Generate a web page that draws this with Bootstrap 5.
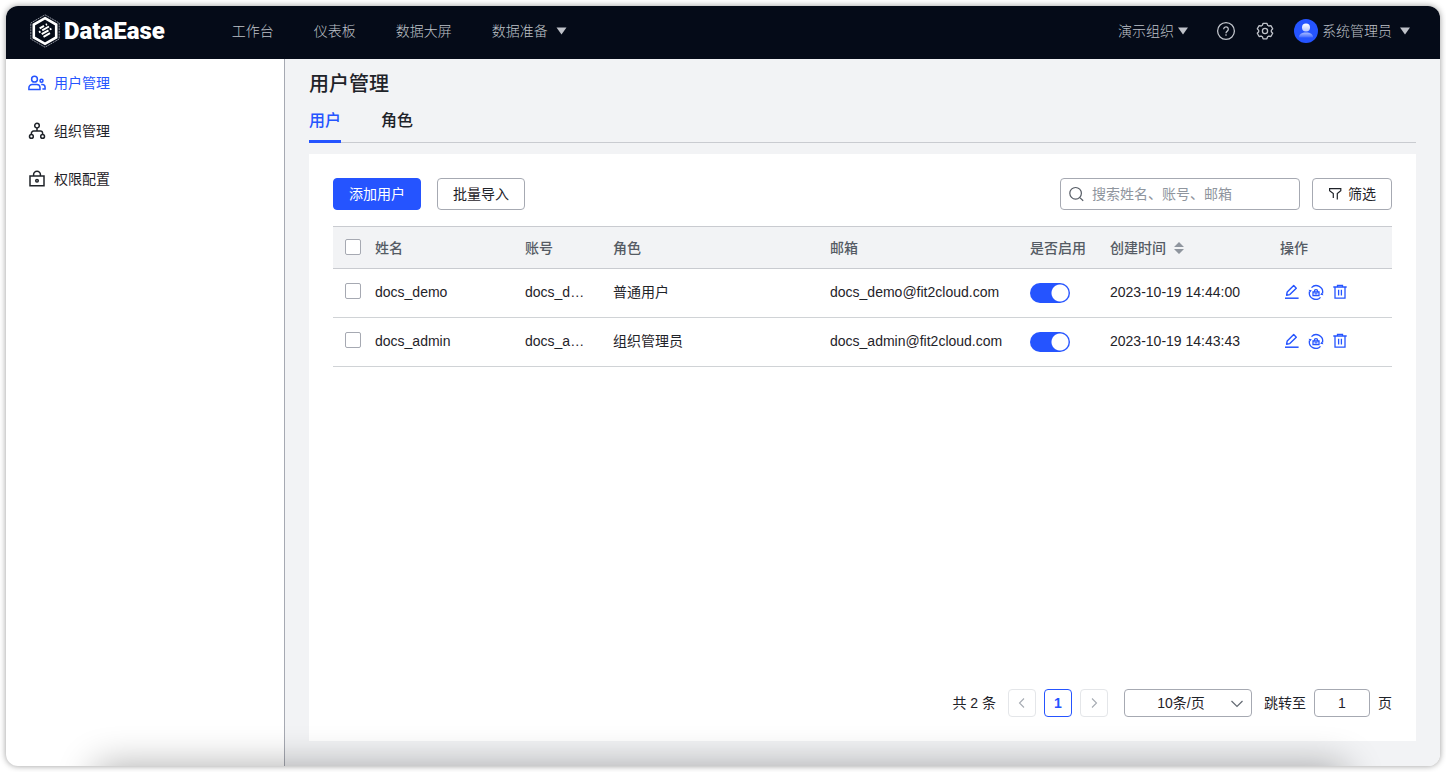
<!DOCTYPE html>
<html lang="zh-CN">
<head>
<meta charset="utf-8">
<meta name="viewport" content="width=device-width, initial-scale=1">
<title>DataEase - 用户管理</title>
<link href="https://cdn.jsdelivr.net/npm/bootstrap@5.3.0/dist/css/bootstrap.min.css" rel="stylesheet">
<style>
  :root { --de-blue: #2554ff; --de-ink: #1f2329; --de-muted: #555b64; --de-line: #bbbfc4; --de-bg: #f2f3f5; --de-edge: #a6a9b2; }
  body { font: 14px/22px "Liberation Sans", "Noto Sans CJK SC", sans-serif; color: var(--de-ink); background: #fff; padding: 6px; min-height: 100vh; }
  svg { display: block; flex: none; }
  .app-window { border-radius: 12px; box-shadow: 0 0 6px rgba(0,0,0,.4); min-height: calc(100vh - 12px); background: #fff; }
  .app-window::after { content: ""; position: absolute; left: 90px; right: 95px; top: 100%; height: 60px; box-shadow: 0 0 38px rgba(0,0,0,.33); pointer-events: none; z-index: 2; }
  .top-bar { background: #050b18; height: 53px; padding: 0 30px 4px 24px; color: #bfc2c9; }
  .top-bar a, .top-bar button { color: inherit; font-weight: 300; }
  .brand-name { font: 900 24px/28px Roboto, sans-serif; color: #fff; }
  .main-menu { gap: 40px; margin-left: 67px; }
  .plain-btn { border: 0; background: none; padding: 0; }
  .side-bar { width: 279px; border-right: 1px solid var(--de-edge); }
  .side-bar .nav-link { height: 48px; padding: 0 22px; gap: 8px; color: var(--de-ink); }
  .side-bar .nav-link.active { color: var(--de-blue); }
  .main-area { background: var(--de-bg); padding: 11px 24px 25px; min-width: 0; }
  .page-title { font-size: 20px; line-height: 28px; font-weight: 500; }
  .page-tabs { gap: 40px; border-bottom: 1px solid #c9cbd0; margin-bottom: 11px; }
  .page-tabs .nav-link { font-size: 16px; line-height: 24px; font-weight: 500; color: var(--de-ink); padding: 11px 0 7px; border-bottom: 3px solid transparent; margin-bottom: -1px; }
  .page-tabs .nav-link.active { color: var(--de-blue); border-color: var(--de-blue); }
  .panel { background: #fff; padding: 24px; }
  .btn-de { height: 32px; padding: 0 15px; font-size: 14px; line-height: 22px; border-radius: 4px; --bs-btn-color: var(--de-ink); --bs-btn-bg: #fff; --bs-btn-border-color: var(--de-edge); }
  .btn-de.btn-primary { --bs-btn-color: #fff; --bs-btn-bg: var(--de-blue); --bs-btn-border-color: var(--de-blue); }
  .search-box { width: 240px; height: 32px; border: 1px solid var(--de-edge); border-radius: 4px; padding: 0 8px; gap: 8px; color: var(--de-muted); }
  .search-box input { border: 0; padding: 0; font-size: 14px; box-shadow: none !important; background: none; }
  .search-box input::placeholder { color: #8f959e; }
  .user-table { table-layout: fixed; margin: 16px 0 0; color: var(--de-ink); --bs-table-color: var(--de-ink); border-color: #d0d1d5; }
  .user-table > :not(caption) > * > * { padding: 0 12px 2px; height: 49px; border-bottom: 1px solid #d0d3d6; vertical-align: middle; white-space: nowrap; }
  .user-table > thead > tr > th { height: 42px; padding-bottom: 0; background: var(--de-bg); color: var(--de-muted); font-weight: 500; border-top: 1px solid #c9cbd0; border-bottom-color: #c9cbd0; }
  .user-table .col-pick { width: 30px; } .user-table .col-name { width: 150px; } .user-table .col-account { width: 88px; }
  .user-table .col-mail { width: 200px; } .user-table .col-enabled { width: 80px; } .user-table .col-time { width: 170px; } .user-table .col-ops { width: 124px; }
  .user-table > :not(caption) > * > .pick-cell { padding-right: 0; }
  .pick-cell .form-check-input { display: block; width: 16px; height: 16px; margin: 0 0 2px; border-radius: 2px; border-color: var(--de-edge); }
  .toggle-input.form-check-input { display: block; width: 40px; height: 20px; margin: 2px 0 0; border-radius: 10px; border: 0; background: radial-gradient(circle at 10px 10px, #fff 8px, transparent 9px) #bbbfc4; }
  .toggle-input.form-check-input:checked { background: radial-gradient(circle at 30px 10px, #fff 8px, transparent 9px) var(--de-blue); }
  .row-tools { gap: 8px; padding-left: 4px; color: var(--de-blue); }
  .row-tools button { color: inherit; }
  .page-btn { width: 28px; height: 28px; padding: 0; border: 1px solid #e4e6e9; border-radius: 4px; background: #fff; color: #a6abb3; }
  .page-btn.active { border-color: var(--de-blue); color: var(--de-blue); font-weight: 700; }
  .page-size { width: 128px; margin-left: 16px; margin-right: 12px; }
  .page-size select { height: 28px; padding: 0 14px 0 0; font-size: 14px; line-height: 22px; border: 1px solid var(--de-edge); border-radius: 4px; background: #fff; text-align: center; text-align-last: center; color: var(--de-ink); }
  .page-size svg { right: 8px; top: 8px; pointer-events: none; }
  .jump-input { width: 56px; height: 28px; border: 1px solid var(--de-edge); border-radius: 4px; text-align: center; padding: 0; margin: 0 8px; font-size: 14px; color: var(--de-ink); }
</style>
</head>
<body>
<svg width="0" height="0" class="position-absolute" aria-hidden="true">
  <defs>
    <symbol id="caret" viewBox="0 0 10 8"><path d="M0 .5h10L5 7.5z" fill="currentColor"/></symbol>
    <symbol id="edit" viewBox="0 0 16 16"><path d="M2.600 11.200l.6-3.200 6.500-6.400 2.600 2.600-6.500 6.400z" fill="none" stroke="currentColor" stroke-width="1.400" stroke-linejoin="round"/><path d="M1 14.200h13.600" stroke="currentColor" stroke-width="1.500"/></symbol>
    <symbol id="reset" viewBox="0 0 16 16"><g fill="none" stroke="currentColor" stroke-width="1.300"><path d="M3.500 3.600A6.500 6.500 0 0 1 14.500 9.500M1.500 7.500A6.500 6.500 0 0 0 12.500 13.400"/><path d="M5 8h6v3.600H5zM6.400 7.900V7.300a1.600 1.600 0 0 1 3.200 0v.6M6.500 9.800h3"/></g><path d="M.6 5.700l3.200.5-1.700 2.300zM15.400 11.300l-3.200-.5 1.700-2.300z" fill="currentColor"/></symbol>
    <symbol id="trash" viewBox="0 0 16 16"><path d="M1.300 3h13.400M5.500 2.900V1.400h5v1.500M3 3.200v11h10v-11M6.600 5.800v5.600M9.400 5.800v5.600" fill="none" stroke="currentColor" stroke-width="1.300"/></symbol>
  </defs>
</svg>
<div class="app-window position-relative d-flex flex-column overflow-hidden">
  <header class="top-bar d-flex align-items-center">
    <a href="#" class="d-flex align-items-center text-decoration-none" aria-label="DataEase">
      <svg width="30" height="34" viewBox="0 0 30 34" fill="none">
        <path d="M15 .8l14.200 8.200v16L15 33.200.8 25V9z" stroke="#aeb3bd" stroke-width=".8" stroke-dasharray="2 .7"/>
        <path d="M15 4.200l11.200 6.400v12.800L15 29.800 3.800 23.400V10.600z" stroke="#fff" stroke-width="2.600"/>
        <path d="M9.700 14.300l4.300-2.500M15.800 10.800l1.200-.7M9 18.300l1.500-.9M12.200 16.400l6.800-3.900M11.700 20.200l6.800-3.900M19.800 15.500l1.600-.9M13.500 22.800l6.500-3.700" stroke="#fff" stroke-width="2"/>
      </svg>
      <span class="brand-name ms-1">DataEase</span>
    </a>
    <nav class="main-menu d-flex" aria-label="主菜单">
      <a href="#" class="text-decoration-none">工作台</a>
      <a href="#" class="text-decoration-none">仪表板</a>
      <a href="#" class="text-decoration-none">数据大屏</a>
      <button type="button" class="plain-btn d-flex align-items-center gap-2">数据准备<svg width="11" height="8"><use href="#caret"/></svg></button>
    </nav>
    <div class="ms-auto d-flex align-items-center">
      <button type="button" class="plain-btn d-flex align-items-center gap-1">演示组织<svg width="10" height="8"><use href="#caret"/></svg></button>
      <button type="button" class="plain-btn ms-4 ps-1" aria-label="帮助">
        <svg width="20" height="20" viewBox="0 0 20 20" fill="none" stroke="currentColor" stroke-width="1.300"><circle cx="10" cy="10" r="8.400"/><path d="M7.700 8.200a2.300 2.300 0 1 1 3.600 1.900c-.9.600-1.300 1-1.300 2.100"/><path d="M10 13.300v1.400"/></svg>
      </button>
      <button type="button" class="plain-btn ms-3" aria-label="设置">
        <svg class="ms-1" width="18" height="18" viewBox="0 0 18 18" fill="none" stroke="currentColor" stroke-width="1.300" stroke-linejoin="round"><path d="M7.100 1.300h3.800l.7 2 1.200.7 2.100-.4 1.800 3.200-1.400 1.600v1.300l1.400 1.600-1.800 3.200-2.100-.4-1.200.7-.7 2H7.100l-.7-2-1.200-.7-2.100.4-1.800-3.200 1.400-1.600V8.400L1.300 6.800l1.800-3.200 2.100.4 1.200-.7z"/><circle cx="9" cy="9" r="2.600"/></svg>
      </button>
      <button type="button" class="plain-btn d-flex align-items-center ms-3">
        <svg class="ms-1" width="24" height="24" viewBox="0 0 24 24"><defs><linearGradient id="face" x2="0" y2="1"><stop stop-color="#fff"/><stop offset="1" stop-color="#b5c5ff"/></linearGradient><linearGradient id="torso" x2="0" y2="1"><stop stop-color="#a9bcff"/><stop offset="1" stop-color="#3f68ff"/></linearGradient></defs><circle cx="12" cy="12" r="12" fill="#2554ff"/><circle cx="12" cy="8.500" r="4" fill="url(#face)"/><path d="M5 18.500c0-3.500 2.600-5 7-5s7 1.500 7 5z" fill="url(#torso)"/></svg>
        <span class="ms-1 me-2">系统管理员</span><svg width="10" height="8"><use href="#caret"/></svg>
      </button>
    </div>
  </header>
  <div class="d-flex flex-grow-1">
    <aside class="side-bar flex-shrink-0">
      <nav class="nav flex-column" aria-label="系统设置">
        <a href="#" class="nav-link active d-flex align-items-center" aria-current="page">
          <svg width="18" height="18" viewBox="0 0 18 18" fill="none" stroke="currentColor" stroke-width="1.500"><circle cx="6.500" cy="5.200" r="2.900"/><path d="M.9 15.500v-1.700a3.200 3.200 0 0 1 3.200-3.200h4.700a3.200 3.200 0 0 1 3.200 3.200v1.700z"/><circle cx="13.500" cy="6.700" r="1.500"/><path d="M13.200 10.600h1a2.900 2.900 0 0 1 2.900 2.900v1.500h-2.700"/></svg>用户管理</a>
        <a href="#" class="nav-link d-flex align-items-center">
          <svg width="18" height="18" viewBox="0 0 18 18" fill="none" stroke="currentColor" stroke-width="1.500"><circle cx="9" cy="3.600" r="2.300"/><circle cx="3.400" cy="14.400" r="1.900"/><circle cx="14.600" cy="14.400" r="1.900"/><path d="M9 6v3.100M3.400 12.500v-1.200a2.200 2.200 0 0 1 2.200-2.200h6.800a2.200 2.200 0 0 1 2.200 2.200v1.200"/></svg>组织管理</a>
        <a href="#" class="nav-link d-flex align-items-center">
          <svg width="18" height="18" viewBox="0 0 18 18" fill="none" stroke="currentColor" stroke-width="1.500"><path d="M2 6h14v9.800H2zM5.600 5.900V4.600a3.400 3.400 0 0 1 6.800 0v1.300"/><circle cx="9" cy="10.800" r="1.300"/></svg>权限配置</a>
      </nav>
    </aside>
    <main class="main-area flex-grow-1 d-flex flex-column">
      <h1 class="page-title mb-0">用户管理</h1>
      <nav class="page-tabs nav" aria-label="用户管理">
        <a href="#" class="nav-link active" aria-current="true">用户</a>
        <a href="#" class="nav-link">角色</a>
      </nav>
      <section class="panel flex-grow-1 d-flex flex-column">
        <div class="d-flex align-items-center">
          <button type="button" class="btn btn-primary btn-de">添加用户</button>
          <button type="button" class="btn btn-de ms-3">批量导入</button>
          <div class="search-box d-flex align-items-center ms-auto me-2">
            <svg width="15" height="16" viewBox="0 0 15 16" fill="none" stroke="currentColor" stroke-width="1.200"><circle cx="6.600" cy="7.300" r="5.800"/><path d="M10.800 11.600l3.400 3.200"/></svg>
            <input type="text" class="form-control" placeholder="搜索姓名、账号、邮箱" aria-label="搜索姓名、账号、邮箱">
          </div>
          <button type="button" class="btn btn-de d-flex align-items-center ms-1"><svg class="me-1" width="16" height="16" viewBox="0 0 16 16" fill="none" stroke="currentColor" stroke-width="1.200"><path d="M5.300 12V7.500L1.600 4.700V2.600h11.200v2.100L9.300 7.500V13.600"/></svg><span class="ms-auto">筛选</span></button>
        </div>
        <table class="table user-table">
          <thead>
            <tr>
              <th class="col-pick pick-cell"><input class="form-check-input" type="checkbox" aria-label="全选"></th>
              <th class="col-name">姓名</th>
              <th class="col-account">账号</th>
              <th>角色</th>
              <th class="col-mail">邮箱</th>
              <th class="col-enabled">是否启用</th>
              <th class="col-time"><span class="d-flex align-items-center gap-2">创建时间<svg width="10" height="12" viewBox="0 0 10 12" fill="#8f959e"><path d="M5 0l5 5H0zM5 12l5-5H0z"/></svg></span></th>
              <th class="col-ops">操作</th>
            </tr>
          </thead>
          <tbody>
            <tr>
              <td class="pick-cell"><input class="form-check-input" type="checkbox" aria-label="选择 docs_demo"></td>
              <td>docs_demo</td><td class="text-truncate">docs_demo</td><td>普通用户</td><td>docs_demo@fit2cloud.com</td>
              <td><input class="form-check-input toggle-input" type="checkbox" role="switch" checked aria-label="启用 docs_demo"></td>
              <td>2023-10-19 14:44:00</td>
              <td><div class="row-tools d-flex"><button type="button" class="plain-btn" aria-label="编辑"><svg width="16" height="16"><use href="#edit"/></svg></button><button type="button" class="plain-btn" aria-label="重置密码"><svg width="16" height="16"><use href="#reset"/></svg></button><button type="button" class="plain-btn" aria-label="删除"><svg width="16" height="16"><use href="#trash"/></svg></button></div></td>
            </tr>
            <tr>
              <td class="pick-cell"><input class="form-check-input" type="checkbox" aria-label="选择 docs_admin"></td>
              <td>docs_admin</td><td class="text-truncate">docs_admin</td><td>组织管理员</td><td>docs_admin@fit2cloud.com</td>
              <td><input class="form-check-input toggle-input" type="checkbox" role="switch" checked aria-label="启用 docs_admin"></td>
              <td>2023-10-19 14:43:43</td>
              <td><div class="row-tools d-flex"><button type="button" class="plain-btn" aria-label="编辑"><svg width="16" height="16"><use href="#edit"/></svg></button><button type="button" class="plain-btn" aria-label="重置密码"><svg width="16" height="16"><use href="#reset"/></svg></button><button type="button" class="plain-btn" aria-label="删除"><svg width="16" height="16"><use href="#trash"/></svg></button></div></td>
            </tr>
          </tbody>
        </table>
        <div class="d-flex align-items-center justify-content-end mt-auto">
          <span class="me-1">共 2 条</span>
          <nav class="d-flex gap-2 ms-2" aria-label="分页">
            <button type="button" class="page-btn d-flex align-items-center justify-content-center" disabled aria-label="上一页"><svg width="12" height="12" viewBox="0 0 12 12" fill="none" stroke="currentColor" stroke-width="1.100"><path d="M8 1.500L3.500 6 8 10.500"/></svg></button>
            <button type="button" class="page-btn active" aria-current="page">1</button>
            <button type="button" class="page-btn d-flex align-items-center justify-content-center" disabled aria-label="下一页"><svg width="12" height="12" viewBox="0 0 12 12" fill="none" stroke="currentColor" stroke-width="1.100"><path d="M4 1.500L8.500 6 4 10.500"/></svg></button>
          </nav>
          <div class="page-size position-relative">
            <select class="form-select" aria-label="每页条数"><option>10条/页</option><option>20条/页</option></select>
            <svg class="position-absolute" width="14" height="14" viewBox="0 0 14 14" fill="none" stroke="#646a73" stroke-width="1.200"><path d="M1.500 4L7 9.500 12.500 4"/></svg>
          </div>
          <label for="jump">跳转至</label>
          <input id="jump" class="jump-input" type="text" value="1">
          <span>页</span>
        </div>
      </section>
    </main>
  </div>
</div>
<script src="https://cdn.jsdelivr.net/npm/bootstrap@5.3.0/dist/js/bootstrap.bundle.min.js"></script>
</body>
</html>
